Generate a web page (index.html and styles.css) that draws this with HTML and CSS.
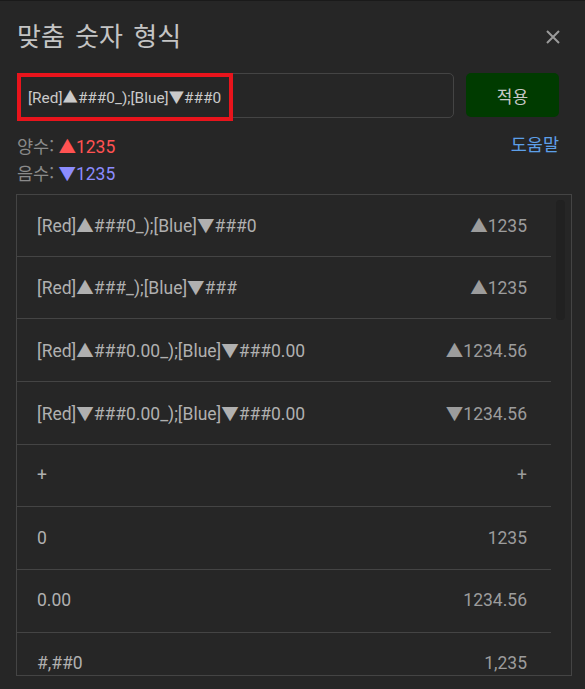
FILE: index.html
```html
<!DOCTYPE html>
<html lang="ko">
<head>
<meta charset="utf-8">
<title>맞춤 숫자 형식</title>
<link rel="stylesheet" href="styles.css">
</head>
<body>
<div class="dialog">
  <div class="header">
    <h1 class="title">맞춤 숫자 형식</h1>
    <button class="close" aria-label="닫기">
      <svg width="16" height="16" viewBox="0 0 16 16"><path d="M2 2L14 14M14 2L2 14" stroke="#9a9a9a" stroke-width="2" fill="none"/></svg>
    </button>
  </div>
  <div class="input-row">
    <div class="input-wrap">
      <div class="input">[Red]▲###0_);[Blue]▼###0</div>
      <div class="highlight"></div>
    </div>
    <button class="apply">적용</button>
  </div>
  <div class="info">
    <div class="samples">
      <div class="sample"><span class="label">양수:</span> <span class="pos">▲1235</span></div>
      <div class="sample"><span class="label">음수:</span> <span class="neg">▼1235</span></div>
    </div>
    <a class="help">도움말</a>
  </div>
  <div class="list">
    <div class="rows">
      <div class="row"><span>[Red]▲###0_);[Blue]▼###0</span><span class="val">▲1235</span></div>
      <div class="row"><span>[Red]▲###_);[Blue]▼###</span><span class="val">▲1235</span></div>
      <div class="row"><span>[Red]▲###0.00_);[Blue]▼###0.00</span><span class="val">▲1234.56</span></div>
      <div class="row"><span>[Red]▼###0.00_);[Blue]▼###0.00</span><span class="val">▼1234.56</span></div>
      <div class="row"><span>+</span><span class="val">+</span></div>
      <div class="row"><span>0</span><span class="val">1235</span></div>
      <div class="row"><span>0.00</span><span class="val">1234.56</span></div>
      <div class="row"><span>#,##0</span><span class="val">1,235</span></div>
    </div>
    <div class="track"><div class="thumb"></div></div>
  </div>
</div>
</body>
</html>
```
FILE: styles.css
```css
html, body {
  margin: 0;
  padding: 0;
  background: #262626;
}
body {
  width: 585px;
  height: 689px;
  overflow: hidden;
  font-family: Roboto, "Noto Sans CJK KR", sans-serif;
  color: #b4b4b4;
}
.dialog {
  border-top: 1px solid #1a1a1a;
  padding: 0 26px 0 17px;
  height: 688px;
  box-sizing: border-box;
}
.header {
  display: flex;
  align-items: center;
  justify-content: space-between;
  height: 72px;
}
.title {
  margin: 0 0 5px 0;
  font-family: "Noto Sans CJK KR", sans-serif;
  font-weight: 400;
  font-size: 26px;
  color: #c4c4c4;
  line-height: 34px;
  word-spacing: 3px;
}
.close {
  background: none;
  border: none;
  padding: 0;
  margin-right: -2px;
  width: 16px;
  height: 16px;
  display: flex;
}
.input-row {
  display: flex;
  gap: 12px;
  height: 45px;
}
.input-wrap {
  position: relative;
  flex: 1;
}
.input {
  height: 45px;
  box-sizing: border-box;
  border: 1px solid #444;
  border-radius: 5px;
  padding: 0 10px;
  display: flex;
  align-items: center;
  font-size: 15.4px;
  color: #cacaca;
}
.highlight {
  position: absolute;
  left: 0;
  top: 0;
  width: 216px;
  height: 48px;
  box-sizing: border-box;
  border: 4px solid #e8141c;
}
.apply {
  width: 93px;
  height: 44px;
  border: none;
  border-radius: 5px;
  background: #003b00;
  color: #c8c8c8;
  font-family: "Noto Sans CJK KR", sans-serif;
  font-size: 17px;
  padding: 0;
}
.info {
  display: flex;
  justify-content: space-between;
  align-items: flex-start;
  margin-top: 15px;
  height: 61px;
}
.sample {
  font-size: 17.5px;
  line-height: 25px;
}
.label {
  color: #8a8a8a;
  font-family: "Noto Sans CJK KR", sans-serif;
}
.pos { color: #ff5252; }
.neg { color: #8c8cff; }
.help {
  color: #5d9fe8;
  font-family: "Noto Sans CJK KR", sans-serif;
  font-size: 17.5px;
  line-height: 22px;
}
.list {
  display: flex;
  border: 1px solid #444;
  height: 482px;
  box-sizing: border-box;
  overflow: hidden;
  margin-left: -1px;
  margin-right: -13px;
}
.rows {
  flex: 1;
  margin-top: -1px;
}
.row {
  display: flex;
  justify-content: space-between;
  align-items: center;
  height: 62.67px;
  box-sizing: border-box;
  border-bottom: 1px solid #444;
  padding: 0 24px 1px 20px;
  font-size: 17.5px;
  color: #b0b0b0;
}
.row .val {
  color: #9c9c9c;
}
.track {
  width: 20px;
  padding: 5px 0 0 5px;
  box-sizing: border-box;
}
.thumb {
  width: 9px;
  height: 120px;
  border-radius: 4px;
  background: #212121;
}
```
